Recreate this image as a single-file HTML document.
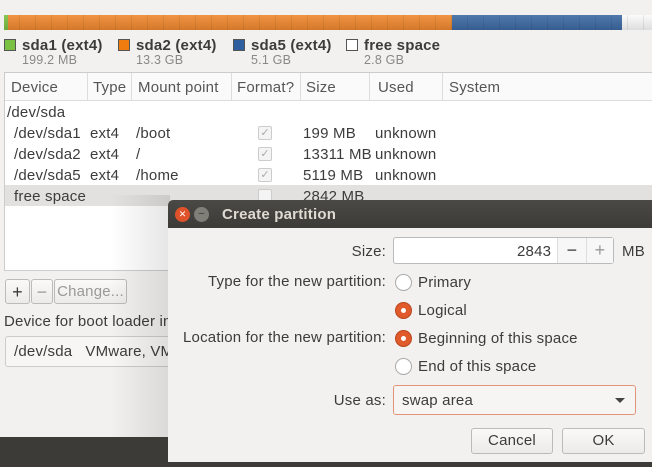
<!DOCTYPE html><html><head><style>
*{box-sizing:border-box;margin:0;padding:0}
body{width:652px;height:467px;overflow:hidden;background:#f2f1f0;font-family:"Liberation Sans",sans-serif;font-size:15px;letter-spacing:.2px;color:#3c3c3c;position:relative}
.a{position:absolute;white-space:nowrap}
.r{position:absolute;white-space:nowrap;right:266px;text-align:right}
.sq{position:absolute;width:12px;height:12px;border:1px solid #555}
.small{color:#888;font-size:12.5px}
.radio{position:absolute;left:395px;width:17px;height:17px;border-radius:50%;border:1px solid #aaa;background:#fff}
.radio.on{background:#e05a2b;border-color:#b8461f}
.radio.on::after{content:"";position:absolute;left:5px;top:5px;width:5px;height:5px;border-radius:50%;background:#fff}
.btn{position:absolute;border:1px solid #bbb;border-radius:3px;background:linear-gradient(#faf9f8,#ecebea);text-align:center;line-height:24px}
.chk{position:absolute;left:258px;width:14px;height:14px;border:1px solid #ccc;border-radius:2px;background:#f4f4f4;color:#aaa;font-size:11px;line-height:12px;text-align:center;letter-spacing:0}
</style></head><body>
<div class="a" style="left:4px;top:15px;width:648px;height:15px;background:linear-gradient(90deg,#7ac143 0 4px,#f0892f 4px 448px,#3e6aa3 448px 618px,#fbfbfb 618px)"></div>
<div class="a" style="left:4px;top:15px;width:648px;height:15px;background:repeating-linear-gradient(90deg,transparent 0 15px,rgba(0,0,0,.08) 15px 16px),linear-gradient(rgba(255,255,255,.1),rgba(0,0,0,.12))"></div>
<div class="sq" style="left:4px;top:39px;background:#7ac143"></div><b class="a" style="left:22px;top:37px">sda1 (ext4)</b><span class="a small" style="left:22px;top:53px">199.2 MB</span>
<div class="sq" style="left:118px;top:39px;background:#f07c10"></div><b class="a" style="left:136px;top:37px">sda2 (ext4)</b><span class="a small" style="left:136px;top:53px">13.3 GB</span>
<div class="sq" style="left:233px;top:39px;background:#2f5f9f"></div><b class="a" style="left:251px;top:37px">sda5 (ext4)</b><span class="a small" style="left:251px;top:53px">5.1 GB</span>
<div class="sq" style="left:346px;top:39px;background:#fff"></div><b class="a" style="left:364px;top:37px">free space</b><span class="a small" style="left:364px;top:53px">2.8 GB</span>
<div class="a" style="left:4px;top:72px;width:660px;height:199px;border:1px solid #ccc;background:#fff"></div>
<div class="a" style="left:5px;top:73px;width:650px;height:28px;border-bottom:1px solid #ddd;background:#fafafa"></div>
<div class="a" style="left:11px;top:79px;color:#555">Device</div><div class="a" style="left:87px;top:73px;height:28px;border-left:1px solid #ddd"></div>
<div class="a" style="left:93px;top:79px;color:#555">Type</div><div class="a" style="left:131px;top:73px;height:28px;border-left:1px solid #ddd"></div>
<div class="a" style="left:138px;top:79px;color:#555">Mount point</div><div class="a" style="left:231px;top:73px;height:28px;border-left:1px solid #ddd"></div>
<div class="a" style="left:237px;top:79px;color:#555">Format?</div><div class="a" style="left:300px;top:73px;height:28px;border-left:1px solid #ddd"></div>
<div class="a" style="left:306px;top:79px;color:#555">Size</div><div class="a" style="left:369px;top:73px;height:28px;border-left:1px solid #ddd"></div>
<div class="a" style="left:378px;top:79px;color:#555">Used</div><div class="a" style="left:442px;top:73px;height:28px;border-left:1px solid #ddd"></div>
<div class="a" style="left:449px;top:79px;color:#555">System</div>
<div class="a" style="left:7px;top:104px">/dev/sda</div>
<div class="a" style="left:14px;top:125px">/dev/sda1</div><div class="a" style="left:90px;top:125px">ext4</div><div class="a" style="left:136px;top:125px">/boot</div><div class="chk" style="top:126px">✓</div><div class="a" style="left:303px;top:125px">199 MB</div><div class="a" style="left:375px;top:125px">unknown</div>
<div class="a" style="left:14px;top:146px">/dev/sda2</div><div class="a" style="left:90px;top:146px">ext4</div><div class="a" style="left:136px;top:146px">/</div><div class="chk" style="top:147px">✓</div><div class="a" style="left:303px;top:146px">13311 MB</div><div class="a" style="left:375px;top:146px">unknown</div>
<div class="a" style="left:14px;top:167px">/dev/sda5</div><div class="a" style="left:90px;top:167px">ext4</div><div class="a" style="left:136px;top:167px">/home</div><div class="chk" style="top:168px">✓</div><div class="a" style="left:303px;top:167px">5119 MB</div><div class="a" style="left:375px;top:167px">unknown</div>
<div class="a" style="left:5px;top:185px;width:650px;height:21px;background:#e2e1e0"></div>
<div class="a" style="left:14px;top:188px">free space</div><div class="chk" style="top:189px"></div><div class="a" style="left:303px;top:188px">2842 MB</div>
<div class="btn" style="left:5px;top:279px;width:25px;height:25px;font-size:18px">+</div>
<div class="btn" style="left:31px;top:279px;width:22px;height:25px;font-size:18px;color:#999">−</div>
<div class="btn" style="left:54px;top:279px;width:73px;height:25px;color:#999">Change...</div>
<div class="a" style="left:4px;top:313px">Device for boot loader installation:</div>
<div class="a" style="left:5px;top:336px;width:300px;height:31px;border:1px solid #ccc;border-radius:3px;background:#f7f6f5;padding:6px 8px">/dev/sda &nbsp;&nbsp;VMware, VMware Virtual S</div>
<div class="a" style="left:0;top:437px;width:652px;height:30px;background:#3c3b37"></div>
<div class="a" style="left:110px;top:195px;width:60px;height:242px;background:linear-gradient(90deg,rgba(0,0,0,0),rgba(0,0,0,.1))"></div>
<div class="a" style="left:168px;top:200px;width:490px;height:262px;background:#f2f1f0;border-radius:5px 5px 0 0;overflow:hidden">
<div class="a" style="left:0;top:0;width:490px;height:28px;background:linear-gradient(#4a4945,#3c3b37)"></div>
</div>
<div class="a" style="left:175px;top:207px;width:15px;height:15px;border-radius:50%;background:#e0522a;color:#fff;font-size:9px;text-align:center;line-height:15px;letter-spacing:0">✕</div>
<div class="a" style="left:194px;top:207px;width:15px;height:15px;border-radius:50%;background:#7f7e79;color:#3c3b37;font-size:11px;text-align:center;line-height:14px;letter-spacing:0">−</div>
<b class="a" style="left:222px;top:206px;color:#dfdbd2">Create partition</b>
<div class="r" style="top:243px">Size:</div>
<div class="a" style="left:393px;top:237px;width:221px;height:27px;border:1px solid #bbb;border-radius:3px;background:#fff"></div>
<div class="a" style="left:517px;top:243px">2843</div>
<div class="a" style="left:557px;top:238px;width:29px;height:25px;border-left:1px solid #ddd;background:#f7f7f7;text-align:center;font-size:18px;line-height:24px">−</div>
<div class="a" style="left:586px;top:238px;width:27px;height:25px;border-left:1px solid #ddd;background:#f7f7f7;text-align:center;font-size:18px;line-height:24px;color:#999">+</div>
<div class="a" style="left:622px;top:243px">MB</div>
<div class="r" style="top:273px">Type for the new partition:</div>
<div class="radio" style="top:274px"></div><div class="a" style="left:418px;top:274px">Primary</div>
<div class="radio on" style="top:302px"></div><div class="a" style="left:418px;top:302px">Logical</div>
<div class="r" style="top:329px">Location for the new partition:</div>
<div class="radio on" style="top:330px"></div><div class="a" style="left:418px;top:330px">Beginning of this space</div>
<div class="radio" style="top:358px"></div><div class="a" style="left:418px;top:358px">End of this space</div>
<div class="r" style="top:392px">Use as:</div>
<div class="a" style="left:393px;top:385px;width:243px;height:30px;border:1px solid #e0957a;border-radius:3px;background:#f6f5f4;padding:6px 8px">swap area</div>
<div class="a" style="left:615px;top:398px;border:5px solid transparent;border-top:5px solid #444"></div>
<div class="btn" style="left:471px;top:428px;width:82px;height:26px">Cancel</div>
<div class="btn" style="left:562px;top:428px;width:83px;height:26px">OK</div>
</body></html>
